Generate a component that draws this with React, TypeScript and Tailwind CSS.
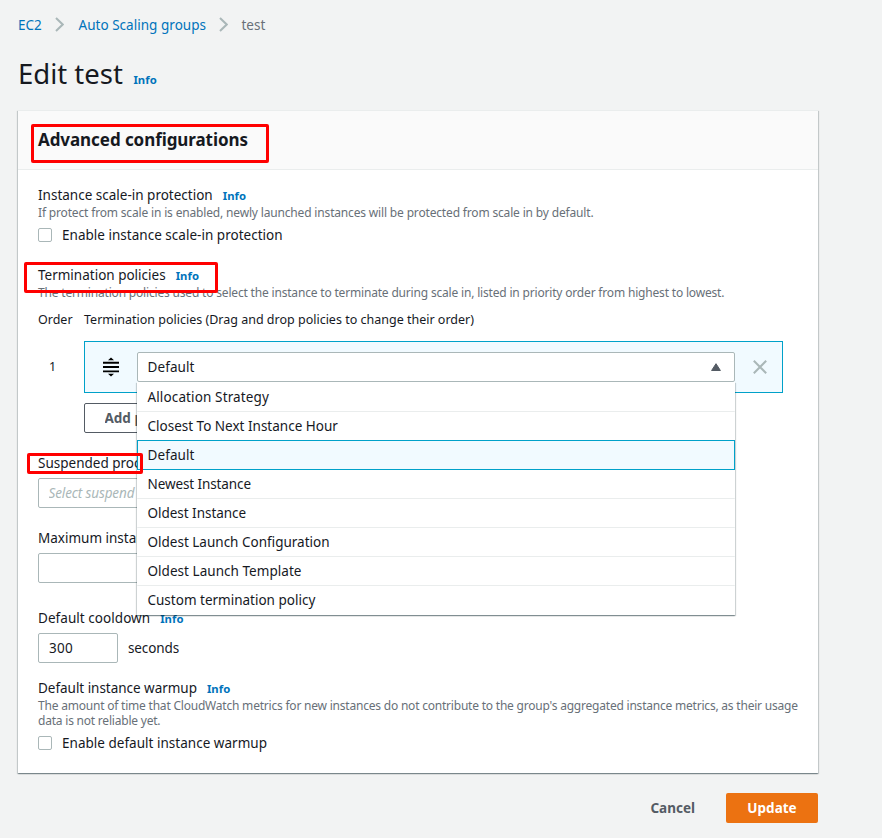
import type { ReactNode } from "react";

const policies: { label: string; tracking?: string }[] = [
  { label: "Allocation Strategy", tracking: "tracking-[0.13px]" },
  { label: "Closest To Next Instance Hour" },
  { label: "Default", tracking: "tracking-[0.1px]" },
  { label: "Newest Instance", tracking: "tracking-[-0.1px]" },
  { label: "Oldest Instance", tracking: "tracking-[-0.03px]" },
  { label: "Oldest Launch Configuration" },
  { label: "Oldest Launch Template", tracking: "tracking-[0.04px]" },
  { label: "Custom termination policy" },
];

function Info({ className = "ml-[10px]" }: { className?: string }) {
  return <a className={`${className} text-[11.3px] font-bold tracking-[0.05px] text-[#0073bb]`}>Info</a>;
}

function Label({ children, info = false, className = "" }: { children: ReactNode; info?: boolean; className?: string }) {
  return (
    <div className={`flex h-5 items-baseline whitespace-nowrap ${className}`}>
      <span>{children}</span>
      {info && <Info />}
    </div>
  );
}

function Checkbox({ children }: { children: ReactNode }) {
  return (
    <label className="flex h-5 items-center whitespace-nowrap tracking-[0.02px]">
      <span className="mr-[10px] size-[14px] rounded-[2px] border border-[#aab7b8] bg-white" />
      {children}
    </label>
  );
}

function Chevron() {
  return (
    <svg className="mt-[2px] h-[15px] w-[9px]" viewBox="0 0 9 15" fill="none" stroke="#aab7b8" strokeWidth="2">
      <path d="M1 1l6.7 6.5L1 14" />
    </svg>
  );
}

function Highlight({ className }: { className: string }) {
  return <div className={`pointer-events-none absolute z-20 rounded-[2px] border-3 border-[#ff0000] ${className}`} />;
}

function DragHandle() {
  return (
    <svg className="h-5 w-4" viewBox="0 0 16 20" fill="#000">
      <path d="M5 3.2L8 .6l3 2.6zM5 16.8h6l-3 2.6z" />
      <path d="M0 4.8h16v1.9H0zM0 9.1h16V11H0zM0 13.4h16v1.9H0z" />
    </svg>
  );
}

export default function App() {
  return (
    <div className="h-[838px] w-[882px] overflow-hidden bg-[#f2f3f3] pl-[18px] pt-[15px] font-['Noto_Sans','Open_Sans',sans-serif] text-[13.5px] leading-5 text-[#16191f]">
      <nav className="flex h-5 text-[#0073bb]">
        <a className="w-[37px]">EC2</a>
        <Chevron />
        <a className="ml-[14.5px] w-[140.5px] whitespace-nowrap tracking-[0.03px]">Auto Scaling groups</a>
        <Chevron />
        <span className="ml-[13.5px] text-[#687078]">test</span>
      </nav>

      <h1 className="mt-[21px] flex h-9 items-baseline text-[27.5px] leading-9">
        Edit test
        <Info className="ml-[10.5px]" />
      </h1>

      <main className="relative mt-[18px] h-[663px] w-[800px] border-t border-[#eaeded] bg-white shadow-[0_1px_1px_0_rgba(0,28,36,0.3),1px_1px_1px_0_rgba(0,28,36,0.15),-1px_1px_1px_0_rgba(0,28,36,0.15)]">
        <header className="h-[59px] border-b border-[#eaeded] bg-[#fafafa] px-5 pt-[18px]">
          <h2 className="text-[17px] font-bold leading-[22px] tracking-[-0.07px]">Advanced configurations</h2>
        </header>

        <div className="px-5 pt-[15px]">
          <Label info>Instance scale-in protection</Label>
          <p className="whitespace-nowrap text-[12px] leading-[15px] tracking-[-0.165px] text-[#687078]">
            If protect from scale in is enabled, newly launched instances will be protected from scale in by default.
          </p>
          <div className="mt-[5px]">
            <Checkbox>Enable instance scale-in protection</Checkbox>
          </div>

          <Label info className="mt-5">Termination policies</Label>
          <p className="whitespace-nowrap text-[12px] leading-[15px] tracking-[-0.18px] text-[#687078]">
            The termination policies used to select the instance to terminate during scale in, listed in priority order from highest to lowest.
          </p>
          <div className="mt-[10px] flex h-5 whitespace-nowrap text-[12.5px]">
            <span className="w-[46px]">Order</span>
            <span>Termination policies (Drag and drop policies to change their order)</span>
          </div>

          <div className="mt-[11px] flex">
            <span className="w-[46px] pl-[11px] pt-[16px] text-[12.5px]">1</span>
            <div className="flex h-[52px] w-[699px] border border-[#00a1c9] bg-[#f1faff] pt-[10px]">
              <div className="w-[52px] pl-[18px] pt-[5px]">
                <DragHandle />
              </div>
              <div className="relative h-[30px] w-[598px]">
                <div className="flex h-[30px] items-center justify-between rounded-[2px] border border-[#aab7b8] bg-white pl-[9.5px] pr-[13px] tracking-[0.1px]">
                  Default
                  <svg className="h-2 w-[10px]" viewBox="0 0 10 8" fill="#545b64" stroke="#545b64" strokeLinejoin="round">
                    <path d="M5 .7L.6 7.5h8.8z" />
                  </svg>
                </div>
                <ul className="absolute left-0 top-[30px] z-10 w-[598px] bg-white shadow-[0_1px_1px_0_rgba(0,28,36,0.3),1px_1px_1px_0_rgba(0,28,36,0.15),-1px_1px_1px_0_rgba(0,28,36,0.15)]">
                  {policies.map(({ label, tracking = "" }, i) => (
                    <li
                      key={label}
                      className={`flex h-[30px] items-center border px-[9.5px] ${i > 0 ? "-mt-px" : ""} ${tracking} ${
                        label === "Default"
                          ? "relative border-[#00a1c9] bg-[#f1faff]"
                          : i === 7
                            ? "border-transparent border-t-[#eaeded]"
                            : i === 0
                              ? "border-transparent border-b-[#eaeded]"
                              : "border-x-transparent border-y-[#eaeded]"
                      }`}
                    >
                      {label}
                    </li>
                  ))}
                </ul>
              </div>
              <svg className="ml-[18px] mt-[8px] size-[14px]" viewBox="0 0 14 14" stroke="#aab7b8" strokeWidth="2">
                <path d="M.8.8l12.4 12.4M13.2.8L.8 13.2" />
              </svg>
            </div>
          </div>

          <button className="ml-[46px] mt-[10px] flex h-[30px] w-[140px] items-center rounded-[2px] border border-[#545b64] bg-white pl-[19.5px] font-bold text-[#545b64]">
            <span className="w-8 overflow-hidden whitespace-nowrap text-left">Add p</span>
          </button>

          <Label className="mt-5 w-[99px] overflow-hidden">Suspended proc</Label>
          <div className="mt-[5px] flex h-[30px] w-[400px] items-center rounded-[2px] border border-[#aab7b8] pl-[9.5px] italic text-[#aab7b8]">
            <span className="w-[88px] overflow-hidden whitespace-nowrap tracking-[-0.12px]">Select suspend</span>
          </div>

          <Label className="mt-5 w-[99px] overflow-hidden">Maximum instan</Label>
          <div className="mt-[5px] h-[30px] w-[400px] rounded-[2px] border border-[#aab7b8]" />

          <Label info className="mt-[25px] tracking-[0.05px]">Default cooldown</Label>
          <div className="mt-[5px] flex items-center gap-[10px]">
            <div className="flex h-[30px] w-[80px] items-center rounded-[2px] border border-[#aab7b8] pl-[10px] tracking-[0.3px]">300</div>
            <span className="tracking-[-0.12px]">seconds</span>
          </div>

          <Label info className="mt-[15px] tracking-[-0.03px]">Default instance warmup</Label>
          <p className="whitespace-nowrap text-[12px] leading-[15px] tracking-[-0.21px] text-[#687078]">
            The amount of time that CloudWatch metrics for new instances do not contribute to the group's aggregated instance metrics, as their usage
            <br />
            data is not reliable yet.
          </p>
          <div className="mt-[5px]">
            <Checkbox>Enable default instance warmup</Checkbox>
          </div>
        </div>

        <Highlight className="left-[13px] top-[13px] h-[39px] w-[238px]" />
        <Highlight className="left-[6px] top-[151px] h-[31px] w-[194px]" />
        <Highlight className="left-[9px] top-[342px] h-[21px] w-[116px]" />
      </main>

      <footer className="mt-5 flex h-[30px] w-[800px] items-center justify-end font-bold">
        <button className="mr-[31px] text-[#545b64]">Cancel</button>
        <button className="h-[30px] w-[92px] rounded-[2px] bg-[#ec7211] text-white">Update</button>
      </footer>
    </div>
  );
}
